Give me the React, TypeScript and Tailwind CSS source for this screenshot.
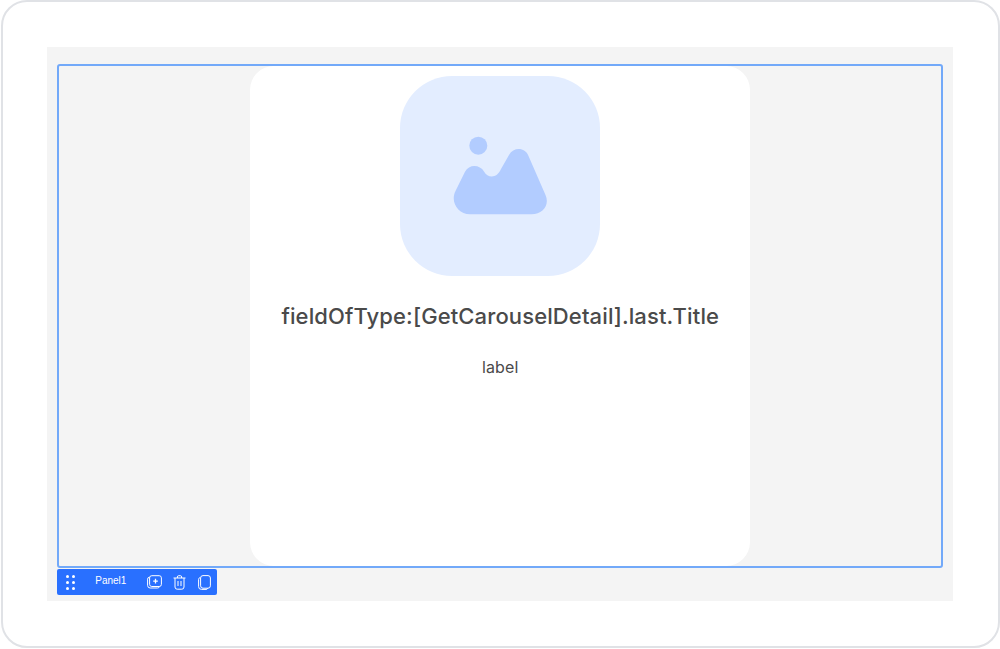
const dots = [0, 1, 2, 3, 4, 5];

function AddIcon() {
  return (
    <svg width="15" height="14" viewBox="0 0 15 14" fill="none" stroke="white" strokeWidth="1">
      <path d="M2.6 2.2 A2 2 0 0 0 .6 4.2 V10.5 A2.6 2.6 0 0 0 3.2 13 H10.5 A2 2 0 0 0 12.5 11.6" />
      <rect x="2.6" y=".7" width="11.8" height="10.8" rx="2.2" />
      <path d="M8.5 3.8 V8.4 M6.2 6.1 H10.8" strokeWidth="1.3" />
    </svg>
  );
}

function TrashIcon() {
  return (
    <svg width="13" height="15" viewBox="0 0 13 15" fill="none" stroke="white" strokeWidth="1">
      <path d="M.5 3 H12.5 M4.4 3 V1.9 A1.2 1.2 0 0 1 5.6 .7 H7.4 A1.2 1.2 0 0 1 8.6 1.9 V3" />
      <path d="M2 3 V12 A2.2 2.2 0 0 0 4.2 14.2 H8.8 A2.2 2.2 0 0 0 11 12 V3" />
      <path d="M5 6 V11 M8 6 V11" />
    </svg>
  );
}

function CopyIcon() {
  return (
    <svg width="13" height="15" viewBox="0 0 13 15" fill="none" stroke="white" strokeWidth="1">
      <path d="M1.9 2.6 A1.9 1.9 0 0 0 .6 4.4 V11.6 A2.8 2.8 0 0 0 3.4 14.4 H8 A1.9 1.9 0 0 0 9.8 13.2" />
      <rect x="2.6" y=".6" width="9.8" height="12.6" rx="2.4" />
    </svg>
  );
}

function PictureIcon() {
  return (
    <svg width="100" height="80" viewBox="0 -4 100 80" fill="#b2ccff">
      <circle cx="28.3" cy="5.7" r="9" />
      <path d="M20 74.3 H81.7 C92.5 74.3 100 65 95.5 55 L78.5 16 C75 7 63.5 7 59 15 L51 29 C47 38.5 38 38.5 34 31.5 C30 24.5 19 24 15 31.7 L5.5 51 C0 62 8 74.3 20 74.3 Z" />
    </svg>
  );
}

export default function App() {
  return (
    <div className="h-[649px] w-[1000px] bg-white font-['Liberation_Sans',sans-serif]">
      <div className="ml-px flex h-[648px] w-[998.5px] items-start justify-center rounded-[26px] border-2 border-[#e0e2e6] pl-[44px] pr-[44px] pt-[45px]">
        <div className="flex h-[554px] w-[906px] flex-col bg-[#f4f4f4] px-[10px] pt-[17px]">
          <div className="flex h-[504px] justify-center rounded-[3px] border-2 border-[#72a9f9]">
            <div className="flex h-[500px] w-[500px] flex-col items-center rounded-[24px] bg-white pt-[10px]">
              <div className="flex h-[200px] w-[200px] items-center justify-center rounded-[52px] bg-[#e3edff]">
                <PictureIcon />
              </div>
              <h1 className="mt-[24px] font-['Inter',sans-serif] text-[22px] leading-[32px] font-medium tracking-[0.12px] text-[#4a4a4a]">
                fieldOfType:[GetCarouselDetail].last.Title
              </h1>
              <p className="mt-[23px] font-['Inter',sans-serif] text-[16px] leading-[24px] tracking-[0.1px] text-[#4a4a4a]">label</p>
            </div>
          </div>
          <div className="mt-px flex h-[26px] w-[160px] items-center rounded-[2px] bg-[#2970ff] text-white">
            <div className="ml-[9px] grid w-[9px] grid-cols-2 gap-x-[3px] gap-y-[3px]">
              {dots.map((d) => (
                <span key={d} className="h-[3px] w-[3px] rounded-full bg-white" />
              ))}
            </div>
            <span className="mb-[2px] ml-[20px] w-[52px] text-[10px] leading-[12px] font-medium">Panel1</span>
            <div className="flex items-center">
              <AddIcon />
              <div className="ml-[11px]">
                <TrashIcon />
              </div>
              <div className="ml-[12px]">
                <CopyIcon />
              </div>
            </div>
          </div>
        </div>
      </div>
    </div>
  );
}
